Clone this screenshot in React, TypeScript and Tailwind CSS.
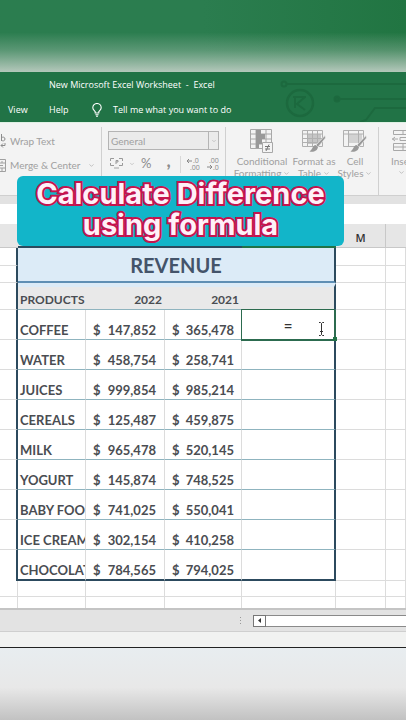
import { ChevronDown } from 'lucide-react';

const products = [
  { name: 'COFFEE', y2022: '147,852', y2021: '365,478' },
  { name: 'WATER', y2022: '458,754', y2021: '258,741' },
  { name: 'JUICES', y2022: '999,854', y2021: '985,214' },
  { name: 'CEREALS', y2022: '125,487', y2021: '459,875' },
  { name: 'MILK', y2022: '965,478', y2021: '520,145' },
  { name: 'YOGURT', y2022: '145,874', y2021: '748,525' },
  { name: 'BABY FOOD', y2022: '741,025', y2021: '550,041' },
  { name: 'ICE CREAM', y2022: '302,154', y2021: '410,258' },
  { name: 'CHOCOLATE', y2022: '784,565', y2021: '794,025' },
];

const gutter = 'border-r-2 border-b border-r-[#2c4a5e] border-b-[#dcdcdc]';
const plain = 'border-r border-b border-[#dcdcdc]';

function CircuitPattern() {
  return (
    <svg className="absolute right-0 top-0 h-[50px] w-[126px]" viewBox="0 0 126 50" fill="none" stroke="#1c693e" strokeWidth="2">
      <circle cx="4" cy="12" r="2.5" />
      <path d="M7 12H126" />
      <circle cx="20" cy="31" r="13" strokeWidth="2.5" />
      <path d="M15 25v11M25 25l-8 7 8 6M13 25h13" />
      <circle cx="57" cy="27" r="2.5" fill="#1c693e" />
      <path d="M60 27H126M80 50l6-2 9-12h31" />
    </svg>
  );
}

function TitleBar() {
  return (
    <header className="relative bg-[#217346] font-['Open_Sans'] text-[9px] font-medium text-white">
      <CircuitPattern />
      <h1 className="relative h-[26px] whitespace-pre pl-[49px] font-medium leading-[26px]">New Microsoft Excel Worksheet  -  Excel</h1>
      <nav className="relative flex h-6 items-center pl-2">
        <button className="w-[41px] text-left">View</button>
        <button className="w-[43px] text-left">Help</button>
        <button className="flex items-center gap-[11px]">
          <svg className="h-[14px] w-[10px]" viewBox="0 0 10 14" fill="none" stroke="#fff" strokeWidth="1.1">
            <path d="M3.200 10V8.600C2.400 7.600.8 6.600.8 4.700a4.200 4.200 0 0 1 8.400 0C9.200 6.600 7.600 7.600 6.800 8.600V10zM3.400 11.700h3.200M4 13.300h2" />
          </svg>
          Tell me what you want to do
        </button>
      </nav>
    </header>
  );
}

function ConditionalIcon() {
  return (
    <svg className="h-6 w-6" viewBox="0 0 24 24" fill="none" stroke="#a8a8a8">
      <path d="M.5 .5h21v19H.5zM.5 5h21M.5 10h21M.5 15h21M6 .5v19M16 .5v19" />
      <path d="M6 1h5v4H6zM6 5h9v5H6zM6 10h6v5H6zM6 15h3v4H6z" fill="#999" stroke="none" />
      <path d="M12.500 13.500h10v10h-10z" fill="#f4f4f4" />
      <path d="M15 17.500h5M15 20h5M19 15.500l-3 6.500" stroke="#777" />
    </svg>
  );
}

function BrushIcon({ shaded }: { shaded?: boolean }) {
  return (
    <svg className="h-6 w-6" viewBox="0 0 24 24" fill="none" stroke="#b0b0b0">
      <path d={shaded ? 'M5 5h14v9H5z' : 'M6 5h13v10H6z'} fill={shaded ? '#d2d2d2' : '#c6c6c6'} stroke="none" />
      <path d="M.5 1.500h20v16H.5zM.5 5h20M5.500 1.500v16M15.500 1.500v16" />
      {!shaded && <path d="M.5 9.500h20M.5 13.500h20M10.500 1.500v16" />}
      <path d="M23 6.500l-9 9.500 2 2 7.500-9z" fill="#999" stroke="#f4f4f4" strokeWidth=".6" />
      <path d="M13.500 16c-3 .5-2.500 4-6 6.500 4 1 8-.5 8.500-4.500z" fill="#999" stroke="none" />
    </svg>
  );
}

function StyleButton({ icon, top, bottom, width }: { icon: React.ReactNode; top: string; bottom: string; width: string }) {
  return (
    <button className={`flex flex-col items-center ${width}`}>
      {icon}
      <span className="mt-0.5 whitespace-nowrap leading-3">{top}</span>
      <span className="flex items-center gap-0.5 whitespace-nowrap leading-3">
        {bottom}
        <ChevronDown size={7} />
      </span>
    </button>
  );
}

function Ribbon() {
  return (
    <section className="flex h-[73px] overflow-hidden border-t border-[#dff0e4] bg-[#f3f3f3] pt-1 text-[10px] text-[#a0a0a0]">
      <div className="flex w-[102px] shrink-0 flex-col gap-1 border-r border-[#d0d0d0] pt-1">
        <button className="flex h-5 items-center gap-1">
          <svg className="h-4 w-[6px]" viewBox="0 0 6 16" fill="none" stroke="#8c8c8c">
            <path d="M1.500 1v7M1.500 5c1-1.500 3.500-1 3.500 1s-2.500 2.500-3.500 1M5 10v2.500H1M3 10.500l-2 2 2 2" />
          </svg>
          Wrap Text
        </button>
        <button className="flex h-5 items-center gap-1 whitespace-nowrap">
          <svg className="h-[13px] w-[6px]" viewBox="0 0 6 13" fill="none" stroke="#a0a0a0">
            <path d="M0 .5h5.500v12H0M0 4h5.500M0 9h5.500M0 6.500h3M2 2v2M2 9v3" />
          </svg>
          Merge &amp; Center
          <ChevronDown className="ml-1" size={7} />
        </button>
      </div>
      <div className="flex w-[124px] shrink-0 flex-col border-r border-[#d0d0d0] px-1.5 pt-1">
        <div className="relative h-[19px] border border-[#b4b4b4] bg-[#ebebeb]">
          <select aria-label="Number format" className="block h-[17px] w-full appearance-none px-0.5 text-[10px] leading-4">
            <option>General</option>
          </select>
          <span className="pointer-events-none absolute inset-y-0 right-0 flex w-[10px] items-center justify-center border-l border-[#b4b4b4]">
            <ChevronDown size={6} />
          </span>
        </div>
        <div className="flex h-7 items-center">
          <button className="flex w-[33px] items-center gap-1.5 pl-0.5" aria-label="Accounting format">
            <svg className="h-3 w-[13px]" viewBox="0 0 13 12" fill="none" stroke="#999">
              <path d="M.5 3V.5H4M9 .5h3.500V3M.5 5v2.500H4M9 7.500h3.500V5M6 6V2.500h2V4H6" />
              <path d="M4 10h5" stroke="#ccc" strokeWidth="2" />
            </svg>
            <ChevronDown size={6} />
          </button>
          <button className="w-[18px] text-left text-[13px] text-[#8c8c8c]">%</button>
          <button className="w-[19px] pb-2 text-center text-[18px] font-bold leading-4 text-[#8c8c8c]">,</button>
          <div className="ml-0.5 flex h-[17px] items-center gap-2 border-l border-[#d8d8d8] pl-1.5">
            <button aria-label="Increase decimal">
              <svg className="h-3 w-3 overflow-visible fill-[#888] font-['Open_Sans'] text-[7px]" viewBox="0 0 12 12">
                <path d="M0 3h5M2 1L0 3l2 2" fill="none" stroke="#888" />
                <text x="6" y="5">.0</text>
                <text x="3" y="12">.00</text>
              </svg>
            </button>
            <button aria-label="Decrease decimal">
              <svg className="h-3 w-3 overflow-visible fill-[#888] font-['Open_Sans'] text-[7px]" viewBox="0 0 12 12">
                <text x="2" y="5">.00</text>
                <path d="M0 9h5M3 7l2 2-2 2" fill="none" stroke="#888" />
                <text x="6" y="12">.0</text>
              </svg>
            </button>
          </div>
        </div>
      </div>
      <div className="flex w-[153px] shrink-0 items-start border-r border-[#d0d0d0] pl-2 pt-0.5">
        <StyleButton icon={<ConditionalIcon />} top="Conditional" bottom="Formatting" width="w-[56px]" />
        <StyleButton icon={<BrushIcon />} top="Format as" bottom="Table" width="w-[48px]" />
        <StyleButton icon={<BrushIcon shaded />} top="Cell" bottom="Styles" width="w-[34px]" />
      </div>
      <button className="flex shrink-0 flex-col items-center self-start pl-3 pt-0.5">
        <svg className="h-6 w-6" viewBox="0 0 24 24" fill="none" stroke="#a8a8a8">
          <path d="M1.500 1.500h20v4h-20zM11 1.500v4M1.500 14.500h20v7h-20zM1.500 18h20M11 14.500v7M8 8.500h14v3H8zM0 10h6M3 8l-2.500 2L3 12" />
        </svg>
        <span className="mt-0.5 leading-3">Insert</span>
        <ChevronDown className="mt-0.5 mr-1" size={7} />
      </button>
    </section>
  );
}

function Banner() {
  return (
    <div className="absolute left-[17px] top-[54px] w-[327px] rounded-md bg-[#12b5c9] pb-1.5 pt-0.5 text-center font-['Inter'] text-[29px] font-bold leading-[31px] text-[#fff0f8] [-webkit-text-stroke:4px_#c4144e] [paint-order:stroke_fill]">
      Calculate Difference
      <br />
      using formula
    </div>
  );
}

function Money({ value, tight }: { value: string; tight?: boolean }) {
  return (
    <div className={tight ? 'flex justify-between px-[7px]' : 'flex justify-between pl-[7px] pr-2'}>
      <span>$</span>
      <span>{value}</span>
    </div>
  );
}

function Sheet() {
  return (
    <table className="w-full table-fixed border-separate border-spacing-0 bg-white text-[13px] font-bold leading-[18px] text-[#4a4d52]">
      <colgroup>
        <col className="w-[18px]" />
        <col className="w-[68px]" />
        <col className="w-[79px]" />
        <col className="w-[77px]" />
        <col className="w-[94px]" />
        <col className="w-[50px]" />
        <col />
      </colgroup>
      <thead>
        <tr className="h-6 bg-[#e6e6e6] text-[11px] text-[#333]">
          <td className="border-b border-[#c8c8c8]" />
          <td className="border-b-2 border-[#2c4a5e]" colSpan={3} />
          <td className="border-b-2 border-[#217346]" />
          <th className="border-b border-r border-[#c8c8c8] p-0 pt-1 font-['Open_Sans'] font-semibold leading-4">M</th>
          <td className="border-b border-[#c8c8c8]" />
        </tr>
      </thead>
      <tbody>
        <tr className="h-[18px]">
          <td className={gutter} />
          <th colSpan={4} rowSpan={2} className="border-b-2 border-r-2 border-b-[#5f8fb4] border-r-[#2c4a5e] bg-[#dcebf7] p-0 text-[20px] leading-6 text-[#44546a]">
            REVENUE
          </th>
          <td className={plain} />
          <td className={plain} />
        </tr>
        <tr className="h-[17px]">
          <td className={gutter} />
          <td className={plain} />
          <td className={plain} />
        </tr>
        <tr className="h-[27px] bg-[#e9e9e9] align-bottom text-[12px]">
          <td className={`${gutter} bg-white`} />
          <th className="border-b border-t-4 border-b-[#8fb4bf] border-t-[#dcebf7] p-0 pl-0.5 text-left">PRODUCTS</th>
          <th className="border-b border-t-4 border-b-[#8fb4bf] border-t-[#dcebf7] p-0 pr-[3px] text-right">2022</th>
          <th className="border-b border-t-4 border-b-[#8fb4bf] border-t-[#dcebf7] p-0 pr-[3px] text-right">2021</th>
          <th className="border-b border-r-2 border-t-4 border-b-[#8fb4bf] border-r-[#2c4a5e] border-t-[#dcebf7]" />
          <td className={`${plain} bg-white`} />
          <td className={`${plain} bg-white`} />
        </tr>
        {products.map((product, index) => {
          const last = index === products.length - 1;
          const line = last ? 'border-b-2 border-b-[#2c4a5e]' : 'border-b border-b-[#8fb4bf]';
          return (
            <tr key={product.name} className={last ? 'h-[31px] align-bottom' : 'h-[30px] align-bottom'}>
              <td className={last ? 'border-r-2 border-r-[#2c4a5e]' : gutter} />
              <th className={`${line} overflow-hidden whitespace-nowrap border-r border-r-[#dcdcdc] p-0 pl-0.5 text-left`}>{product.name}</th>
              <td className={`${line} border-r border-r-[#dcdcdc] p-0`}>
                <Money value={product.y2022} />
              </td>
              <td className={`${line} border-r border-r-[#dcdcdc] p-0`}>
                <Money value={product.y2021} tight />
              </td>
              {index === 0 ? (
                <td className="relative border-b border-r-2 border-[#2c6b4f] p-0 align-middle shadow-[-1px_-1px_0_#2c6b4f,-1px_1px_0_#2c6b4f]">
                  <input aria-label="Difference" defaultValue="=" className="block w-full text-center text-[15px] leading-6 text-[#333] outline-none" />
                  <svg className="absolute right-[9px] top-3 h-[14px] w-[7px]" viewBox="0 0 7 14" fill="none" stroke="#333">
                    <path d="M1 .5h1.500l1 1 1-1H6M3.500 1.500v11M1 13.500h1.500l1-1 1 1H6M2 9.500h3" />
                  </svg>
                  <span className="absolute -bottom-0.5 -right-[3px] h-1 w-1 bg-[#217346]" />
                </td>
              ) : (
                <td className={`${line} border-r-2 border-r-[#2c4a5e]`} />
              )}
              <td className={plain} />
              <td className={plain} />
            </tr>
          );
        })}
        <tr className="h-4">
          {[0, 1, 2, 3, 4, 5, 6].map((col) => (
            <td key={col} className={plain} />
          ))}
        </tr>
        <tr className="h-[11px]">
          {[0, 1, 2, 3, 4, 5, 6].map((col) => (
            <td key={col} className="border-r border-[#dcdcdc]" />
          ))}
        </tr>
      </tbody>
    </table>
  );
}

function ScrollRow() {
  return (
    <div className="flex h-6 items-center border-b border-t-2 border-b-[#cfcfcf] border-t-[#c4c4c4] bg-[#e3e3e3] pl-[240px]">
      <span className="flex flex-col gap-0.5" aria-hidden="true">
        <i className="h-px w-px bg-[#999]" />
        <i className="h-px w-px bg-[#999]" />
        <i className="h-px w-px bg-[#999]" />
      </span>
      <button aria-label="Scroll left" className="ml-3 flex h-3 w-[13px] items-center justify-center border border-[#777] bg-white">
        <svg className="h-[5px] w-[3px]" viewBox="0 0 3 5">
          <path d="M3 0v5L0 2.500z" fill="#333" />
        </svg>
      </button>
      <div className="h-3 flex-1 border-y border-[#8a8a8a] bg-white" />
    </div>
  );
}

export default function App() {
  return (
    <div className="flex min-h-screen flex-col overflow-hidden bg-white font-['Lato',sans-serif]">
      <div className="h-[72px] bg-linear-to-r from-[#2b7d4f] via-[#2b7d4f] to-[#217542]">
        <div className="h-full bg-linear-to-b from-transparent from-45% via-[#b4c8bb]/35 via-70% to-[#b4c8bb]" />
      </div>
      <TitleBar />
      <main className="relative">
        <Ribbon />
        <div className="h-[9px] border-t border-[#cfcfcf] bg-[#e2e2e2]" />
        <input aria-label="Formula bar" className="block h-5 w-full bg-white outline-none" />
        <Sheet />
        <Banner />
      </main>
      <ScrollRow />
      <div className="h-4 border-b border-[#222] bg-[#f1f2f1]" />
      <div className="min-h-[72px] flex-1 bg-linear-to-b from-[#e8edf0] via-[#e8e8e8] via-55% to-[#c2c2c2]" />
    </div>
  );
}
